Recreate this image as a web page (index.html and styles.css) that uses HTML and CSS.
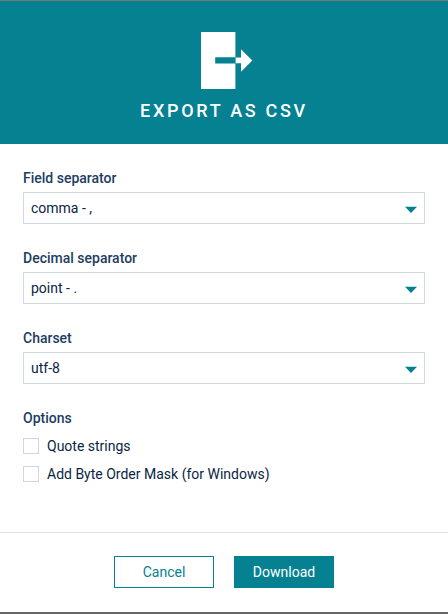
FILE: index.html
```html
<!DOCTYPE html>
<html lang="en">
<head>
<meta charset="utf-8">
<title>Export as CSV</title>
<link rel="stylesheet" href="styles.css">
</head>
<body>
<main class="dialog">
  <header class="header">
    <svg class="export-icon" width="52" height="58" viewBox="0 0 52 58" aria-hidden="true">
      <path fill="#fff" d="M0 0H34.400V25.300H14.200V31.500H34.400V57H0Z"/>
      <path fill="#fff" d="M34.600 25.600H40V17.200L51.300 28.500L40 39.800V31.200H34.600Z"/>
    </svg>
    <h1 class="title">EXPORT AS CSV</h1>
  </header>
  <form class="content">
    <div class="field"><span class="label">Field separator</span><div class="select"><span>comma - ,</span><svg class="arrow" viewBox="0 0 12 7" aria-hidden="true"><path d="M0 .7H12L6 7Z"/></svg></div></div>
    <div class="field"><span class="label">Decimal separator</span><div class="select"><span>point - .</span><svg class="arrow" viewBox="0 0 12 7" aria-hidden="true"><path d="M0 .7H12L6 7Z"/></svg></div></div>
    <div class="field"><span class="label">Charset</span><div class="select"><span>utf-8</span><svg class="arrow" viewBox="0 0 12 7" aria-hidden="true"><path d="M0 .7H12L6 7Z"/></svg></div></div>
    <div class="options"><span class="label">Options</span>
      <label class="option"><input class="check" type="checkbox">Quote strings</label>
      <label class="option"><input class="check" type="checkbox">Add Byte Order Mask (for Windows)</label>
    </div>
  </form>
  <footer class="footer"><button class="button">Cancel</button><button class="button primary">Download</button></footer>
</main>
</body>
</html>
```
FILE: styles.css
```css
* { box-sizing: border-box; }
body { margin: 0; background: #fff; color: #0b2545; font: 14px/20px Roboto, sans-serif; }
.dialog { height: 614px; display: flex; flex-direction: column; border-top: 1px solid #777; border-bottom: 2px solid #666; }
.header { height: 143px; padding-top: 31px; background: #058192; display: flex; flex-direction: column; align-items: center; }
.export-icon { display: block; margin-left: 6px; }
.title { margin: 10px 0 0; color: #fff; font-size: 18px; line-height: 22px; font-weight: 500; letter-spacing: 2.7px; }
.content { flex: 1; padding: 24px 23px 0; }
.field { height: 80px; }
.label { display: block; height: 24px; font-weight: 500; color: #1d3d5f; }
.select { height: 32px; padding: 0 7px; border: 1px solid #d0d6e0; display: flex; align-items: center; justify-content: space-between; }
.arrow { width: 12px; height: 7px; margin-top: 3px; fill: #058192; }
.option { height: 28px; display: flex; align-items: center; gap: 8px; }
.check { appearance: none; width: 16px; height: 16px; margin: 0; border: 1px solid #d0d6e0; }
.footer { height: 80px; padding-top: 23px; border-top: 1px solid #dfe2e6; display: flex; justify-content: center; gap: 20px; }
.button { width: 100px; height: 32px; padding: 0; border: 1px solid #058192; background: #fff; color: #058192; font: 14px/20px Roboto, sans-serif; }
.primary { background: #058192; color: #fff; }
```
